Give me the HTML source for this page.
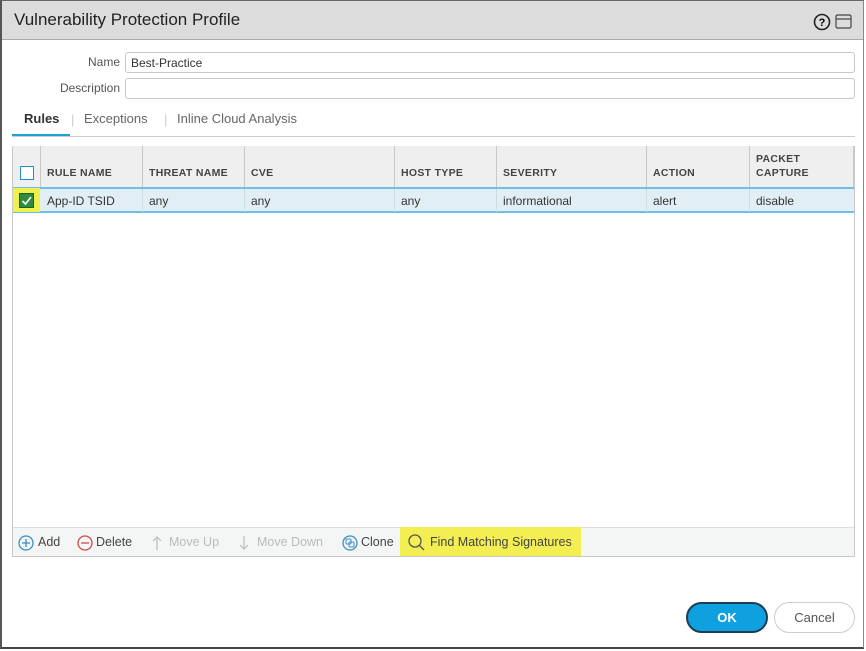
<!DOCTYPE html>
<html><head><style>
*{box-sizing:border-box;margin:0;padding:0}
body{width:866px;height:651px;background:#fff;font-family:"Liberation Sans",sans-serif;position:relative;overflow:hidden;color:#333}
.abs{position:absolute}
#frame{left:0;top:0;width:864px;height:649px;border-left:2px solid #555;border-bottom:2px solid #444;border-top:1px solid #666;border-right:1px solid #888}
#hdr{left:2px;top:1px;width:861px;height:39px;background:#dcdcdc;border-bottom:1px solid #aaa}
#hdr .t{position:absolute;left:12px;top:9px;font-size:17px;color:#222}
.lbl{font-size:12px;color:#555;text-align:right;width:118px}
.inp{border:1px solid #c8c8c8;border-radius:3px;height:21px;font-size:12px;padding:3px 5px;color:#333}
.tab{font-size:13px;color:#666}
.th{position:absolute;top:146px;height:42px;background:#efefef;border-right:1px solid #c8c8c8;font-size:10.5px;font-weight:bold;color:#444;letter-spacing:.3px;padding-left:6px}
.td{position:absolute;top:189px;height:23px;border-right:1px solid #cdd;font-size:12px;color:#333;padding:5px 0 0 6px}
.tb{position:absolute;top:535px;font-size:12.5px;color:#444}
.g{color:#bbb}
</style></head><body>
<div id="frame" class="abs"></div>
<div id="hdr" class="abs"><div class="t">Vulnerability Protection Profile</div>
<svg class="abs" style="left:811px;top:12px" width="40" height="18"><circle cx="9" cy="9" r="7.5" fill="none" stroke="#222" stroke-width="1.6"/><text x="9" y="13" font-size="11" font-weight="bold" text-anchor="middle" font-family="Liberation Sans">?</text><rect x="23" y="2" width="15" height="13" rx="1.5" fill="none" stroke="#444" stroke-width="1.2"/><line x1="23" y1="6" x2="38" y2="6" stroke="#444" stroke-width="1.2"/></svg>
</div>
<div class="abs lbl" style="left:2px;top:55px">Name</div>
<div class="abs inp" style="left:125px;top:52px;width:730px">Best-Practice</div>
<div class="abs lbl" style="left:2px;top:81px">Description</div>
<div class="abs inp" style="left:125px;top:78px;width:730px"></div>
<div class="abs tab" style="left:24px;top:111px;font-weight:bold;color:#333">Rules</div>
<div class="abs tab" style="left:71px;top:112px;color:#ccc">|</div>
<div class="abs tab" style="left:84px;top:111px">Exceptions</div>
<div class="abs tab" style="left:164px;top:112px;color:#ccc">|</div>
<div class="abs tab" style="left:177px;top:111px">Inline Cloud Analysis</div>
<div class="abs" style="left:12px;top:136px;width:843px;height:1px;background:#ccc"></div>
<div class="abs" style="left:12px;top:134px;width:58px;height:2px;background:#1ea1d7"></div>
<div class="abs" style="left:12px;top:146px;width:843px;height:411px;border:1px solid #c8c8c8"></div>
<div class="th" style="left:13px;width:28px"></div>
<div class="abs" style="left:20px;top:166px;width:14px;height:14px;border:1.5px solid #1e8fcf;background:#fff"></div>
<div class="th" style="left:41px;width:102px;padding-top:21px">RULE NAME</div>
<div class="th" style="left:143px;width:102px;padding-top:21px">THREAT NAME</div>
<div class="th" style="left:245px;width:150px;padding-top:21px">CVE</div>
<div class="th" style="left:395px;width:102px;padding-top:21px">HOST TYPE</div>
<div class="th" style="left:497px;width:150px;padding-top:21px">SEVERITY</div>
<div class="th" style="left:647px;width:103px;padding-top:21px">ACTION</div>
<div class="th" style="left:750px;width:104px;padding-top:6px;line-height:14px">PACKET<br>CAPTURE</div>
<div class="abs" style="left:13px;top:187px;width:841px;height:26px;background:#e1eef6;border-top:2px solid #6cc0e8;border-bottom:2px solid #6cc0e8"></div>
<div class="abs" style="left:13px;top:188px;width:27px;height:24px;background:#eef14d"></div>
<div class="abs" style="left:19px;top:193px;width:15px;height:15px;background:#2d8a3e;border:1px solid #1f5f2a"><svg width="13" height="13"><path d="M2.5 7 L5.5 10 L11 3" fill="none" stroke="#fff" stroke-width="1.6"/></svg></div>
<div class="td" style="left:41px;width:102px">App-ID TSID</div>
<div class="td" style="left:143px;width:102px">any</div>
<div class="td" style="left:245px;width:150px">any</div>
<div class="td" style="left:395px;width:102px">any</div>
<div class="td" style="left:497px;width:150px">informational</div>
<div class="td" style="left:647px;width:103px">alert</div>
<div class="td" style="left:750px;width:103px;border:none">disable</div>
<div class="abs" style="left:13px;top:527px;width:841px;height:29px;background:#f4f5f5;border-top:1px solid #ddd"></div>
<div class="abs" style="left:400px;top:527px;width:181px;height:29px;background:#f3ee52"></div>
<svg class="abs" style="left:17px;top:534px" width="18" height="18"><circle cx="9" cy="9" r="7" fill="none" stroke="#3a8fc4" stroke-width="1.3"/><path d="M9 5v8M5 9h8" stroke="#3a8fc4" stroke-width="1.3"/></svg>
<div class="tb" style="left:38px">Add</div>
<svg class="abs" style="left:76px;top:534px" width="18" height="18"><circle cx="9" cy="9" r="7" fill="none" stroke="#d04a4a" stroke-width="1.3"/><path d="M5 9h8" stroke="#d04a4a" stroke-width="1.3"/></svg>
<div class="tb" style="left:96px">Delete</div>
<svg class="abs" style="left:151px;top:535px" width="12" height="16"><path d="M6 2v13M2 6l4-4 4 4" fill="none" stroke="#bbb" stroke-width="1.2"/></svg>
<div class="tb g" style="left:169px">Move Up</div>
<svg class="abs" style="left:238px;top:535px" width="12" height="16"><path d="M6 1v13M2 10l4 4 4-4" fill="none" stroke="#bbb" stroke-width="1.2"/></svg>
<div class="tb g" style="left:257px">Move Down</div>
<svg class="abs" style="left:341px;top:534px" width="18" height="18"><circle cx="9" cy="9" r="7" fill="none" stroke="#3a8fc4" stroke-width="1.3"/><rect x="5" y="5" width="5" height="5" rx="1" fill="none" stroke="#3a8fc4"/><rect x="8" y="8" width="5" height="5" rx="1" fill="none" stroke="#3a8fc4"/></svg>
<div class="tb" style="left:361px">Clone</div>
<svg class="abs" style="left:407px;top:533px" width="20" height="20"><circle cx="8" cy="8" r="6" fill="none" stroke="#555" stroke-width="1.3"/><path d="M12.5 12.5L17 17" stroke="#555" stroke-width="1.3"/></svg>
<div class="tb" style="left:430px">Find Matching Signatures</div>
<div class="abs" style="left:686px;top:602px;width:82px;height:31px;border-radius:16px;background:#0fa0e0;border:2px solid #1d3d55;color:#fff;font-size:13px;font-weight:bold;text-align:center;line-height:27px">OK</div>
<div class="abs" style="left:774px;top:602px;width:81px;height:31px;border-radius:16px;background:#fff;border:1px solid #ccc;color:#555;font-size:13px;text-align:center;line-height:29px">Cancel</div>
</body></html>
